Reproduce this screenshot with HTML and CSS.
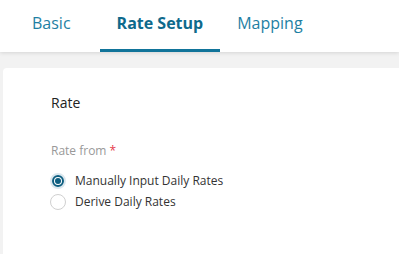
FILE: index.html
```html
<!DOCTYPE html>
<html>
<head>
<meta charset="utf-8">
<link rel="stylesheet" href="styles.css">
</head>
<body>
<div class="header">
  <nav class="tabs">
    <div class="tab">Basic</div>
    <div class="tab active">Rate Setup</div>
    <div class="tab">Mapping</div>
  </nav>
</div>
<div class="main">
  <div class="card">
    <div class="section-title">Rate</div>
    <div class="field">
      <div class="label">Rate from <span class="req">*</span></div>
      <div class="radios">
        <label class="radio checked"><span class="dot"></span><span>Manually Input Daily Rates</span></label>
        <label class="radio"><span class="dot"></span><span>Derive Daily Rates</span></label>
      </div>
    </div>
  </div>
</div>
</body>
</html>
```
FILE: styles.css
```css
html, body {
  margin: 0;
  padding: 0;
  height: 100%;
}
body {
  background: #f2f2f2;
  font-family: "Open Sans", "Noto Sans", sans-serif;
  overflow: hidden;
}
.header {
  background: #fff;
  height: 52px;
  box-shadow: 0 1px 4px rgba(0,0,0,0.12);
  position: relative;
  z-index: 1;
}
.tabs {
  display: flex;
  height: 100%;
  padding-left: 14px;
}
.tab {
  display: flex;
  align-items: center;
  padding: 0 17px 3px;
  font-size: 16px;
  color: #1e7fa3;
  border-bottom: 3px solid transparent;
  box-sizing: border-box;
}
.tab:first-child {
  margin-right: 12px;
  padding-left: 18px;
}
.tab.active {
  font-weight: 700;
  color: #0e6a8c;
  border-bottom-color: #11749a;
}
.main {
  padding: 16px 0 0 3px;
}
.card {
  background: #fff;
  border-radius: 4px 0 0 0;
  padding: 26px 48px 0;
  height: 160px;
}
.section-title {
  font-size: 14px;
  color: #222;
  line-height: 18px;
}
.field {
  margin-top: 31px;
}
.label {
  font-size: 12px;
  color: #999;
  line-height: 16px;
}
.req {
  color: #e5394b;
}
.radios {
  margin-top: 13px;
  display: flex;
  flex-direction: column;
  gap: 4px;
}
.radio {
  display: flex;
  align-items: center;
  gap: 9px;
  font-size: 12px;
  color: #333;
  line-height: 17px;
}
.dot {
  width: 16px;
  height: 16px;
  border-radius: 50%;
  border: 1px solid #d0d0d0;
  box-sizing: border-box;
  background: #fff;
  position: relative;
  margin-left: -1px;
}
.radio.checked .dot {
  border: 2px solid #dbe7ee;
}
.radio.checked .dot::before {
  content: "";
  position: absolute;
  left: 0;
  top: 0;
  width: 12px;
  height: 12px;
  box-sizing: border-box;
  border-radius: 50%;
  border: 2px solid #0e5e80;
}
.radio.checked .dot::after {
  content: "";
  position: absolute;
  left: 3px;
  top: 3px;
  width: 6px;
  height: 6px;
  border-radius: 50%;
  background: #0e5e80;
}
```
